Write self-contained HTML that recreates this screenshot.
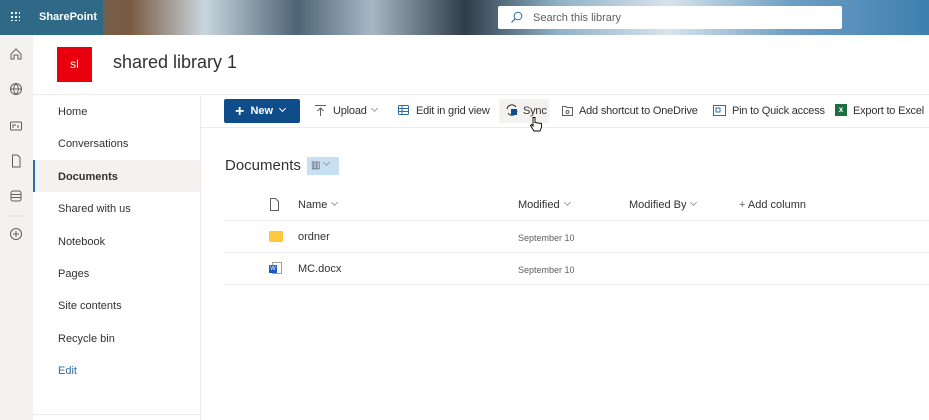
<!DOCTYPE html>
<html><head><meta charset="utf-8"><style>
*{margin:0;padding:0;box-sizing:border-box}
body{width:929px;height:420px;overflow:hidden;background:#fff;font-family:"Liberation Sans",sans-serif;color:#323130;position:relative;font-size:11px}
.a{position:absolute;white-space:nowrap}
.top{left:0;top:0;width:929px;height:35px;background:linear-gradient(90deg,#5c6f7a 0%,#7a5a40 14%,#c9d6de 22%,#4e6474 32%,#a7b8c4 40%,#2f3d48 50%,#8fb0c8 60%,#d8e4ec 72%,#6f9fc4 85%,#3d7fb0 100%)}
.brand{left:0;top:0;width:103px;height:35px;background:#2e6a88}
.rail{left:0;top:35px;width:33px;height:385px;background:#f3f2f1}
.nav div{position:absolute;left:58px;font-size:11px}
.cmd{font-size:11px;color:#323130;letter-spacing:-0.2px}
.ch{display:inline-block;width:5px;height:5px;border-right:1px solid #a19f9d;border-bottom:1px solid #a19f9d;transform:rotate(45deg);margin-left:5px;vertical-align:3px}
</style></head><body>
<div class="a top"></div>
<div class="a brand"></div>
<div class="a" style="left:10px;top:11px;width:10px;height:10px;background:radial-gradient(circle,#fff 1px,transparent 1.3px) 0 0/4px 4px"></div>
<div class="a" style="left:39px;top:11px;color:#fff;font-weight:bold;font-size:11px">SharePoint</div>
<div class="a" style="left:498px;top:6px;width:344px;height:23px;background:#fff;border-radius:2px"></div>
<svg class="a" style="left:510px;top:11px" width="13" height="13" viewBox="0 0 13 13"><circle cx="8" cy="5" r="3.8" fill="none" stroke="#2f6ea5" stroke-width="1"/><path d="M5.3 7.7L1.5 11.5" stroke="#2f6ea5" stroke-width="1.2"/></svg>
<div class="a" style="left:533px;top:12px;color:#605e5c;font-size:11px">Search this library</div>

<div class="a rail"></div>
<svg class="a" style="left:8px;top:45px" width="16" height="210" viewBox="0 0 16 210" fill="none" stroke="#605e5c" stroke-width="1">
<path d="M3 9L8 4L13 9V14H10V10H6V14H3Z"/>
<circle cx="8" cy="44" r="5.5"/><path d="M2.5 44H13.5M8 38.5C5 42 5 46 8 49.5C11 46 11 42 8 38.5"/>
<rect x="2.5" y="77" width="11" height="8" rx="1"/><path d="M5 83V80H8M10 80V83"/>
<path d="M4.5 110H9.5L12 112.5V122H4.5Z"/>
<rect x="3" y="146" width="10" height="10" rx="2"/><path d="M3 149.5H13M3 152.5H13"/>
<line x1="0" y1="171" x2="16" y2="171" stroke="#e1dfdd"/>
<circle cx="8" cy="189" r="5.5"/><path d="M8 186V192M5 189H11"/>
</svg>

<div class="a" style="left:57px;top:47px;width:35px;height:35px;background:#e8000f;color:#fff;font-size:12px;text-align:center;line-height:35px">sl</div>
<div class="a" style="left:113px;top:52px;font-size:18px;color:#323130">shared library 1</div>

<div class="a" style="left:33px;top:94px;width:896px;height:1px;background:#edebe9"></div>
<div class="a" style="left:200px;top:95px;width:1px;height:325px;background:#edebe9"></div>
<div class="a" style="left:33px;top:414px;width:167px;height:1px;background:#edebe9"></div>
<div class="a" style="left:33px;top:160px;width:167px;height:32px;background:#f3f2f1"></div>
<div class="a" style="left:33px;top:160px;width:2px;height:32px;background:#2f6ea5"></div>
<div class="nav">
<div style="top:106px">Home</div>
<div style="top:138px">Conversations</div>
<div style="top:171px;font-weight:bold">Documents</div>
<div style="top:203px">Shared with us</div>
<div style="top:236px">Notebook</div>
<div style="top:268px">Pages</div>
<div style="top:300px">Site contents</div>
<div style="top:333px">Recycle bin</div>
<div style="top:365px;color:#2f6ea5">Edit</div>
</div>

<div class="a" style="left:201px;top:127px;width:728px;height:1px;background:#edebe9"></div>
<div class="a" style="left:224px;top:99px;width:76px;height:24px;background:#0f4c8a;border-radius:2px;color:#fff;font-weight:bold;font-size:11px;line-height:24px;padding-left:11px"><span style="font-size:16px;vertical-align:-2px">+</span>&nbsp; New<span class="ch" style="border-color:#fff;margin-left:7px"></span></div>
<div class="a" style="left:499px;top:99px;width:50px;height:24px;background:#f3f2f1"></div>
<svg class="a" style="left:314px;top:104px" width="13" height="13" fill="none" stroke="#605e5c"><path d="M1 1.5H12M6.5 12V4M3.5 7L6.5 4L9.5 7"/></svg>
<div class="a cmd" style="left:333px;top:105px">Upload<span class="ch"></span></div>
<svg class="a" style="left:398px;top:104px" width="12" height="12" fill="none" stroke="#2f6ea5"><rect x="0.5" y="1.5" width="10" height="9" rx="1"/><path d="M0.5 4.5H10.5M0.5 7.5H10.5M4 1.5V10.5"/></svg>
<div class="a cmd" style="left:416px;top:105px">Edit in grid view</div>
<svg class="a" style="left:505px;top:103px" width="14" height="14" fill="none"><path d="M2 6A5 5 0 0 1 11 4" stroke="#323130"/><path d="M12 8A5 5 0 0 1 3 10" stroke="#323130"/><rect x="6" y="6" width="6" height="6" fill="#0f4c8a"/></svg>
<div class="a cmd" style="left:523px;top:105px">Sync</div>
<svg class="a" style="left:529px;top:116px" width="14" height="18"><path d="M4 1.5V10L2.5 8.5 1.5 9.5 5 15H11L12.5 11V7.5L6 6.5V1.5Z" fill="#fff" stroke="#000" stroke-width="0.9"/></svg>
<svg class="a" style="left:561px;top:104px" width="13" height="13" fill="none" stroke="#605e5c"><path d="M1.5 2.5H5L6 3.5H11.5V11.5H1.5Z"/><circle cx="6.5" cy="8" r="1.5"/></svg>
<div class="a cmd" style="left:579px;top:105px">Add shortcut to OneDrive</div>
<svg class="a" style="left:713px;top:104px" width="13" height="13" fill="none" stroke="#2f6ea5"><rect x="0.5" y="1.5" width="12" height="10"/><rect x="3" y="4" width="4" height="4"/></svg>
<div class="a cmd" style="left:732px;top:105px">Pin to Quick access</div>
<div class="a" style="left:835px;top:104px;width:12px;height:12px;background:#1d6f42;color:#fff;font-size:8px;font-weight:bold;text-align:center;line-height:12px">x</div>
<div class="a cmd" style="left:853px;top:105px">Export to Excel</div>

<div class="a" style="left:225px;top:157px;font-size:15px;color:#323130">Documents</div>
<div class="a" style="left:307px;top:157px;width:32px;height:18px;background:#c7e0f4;color:#605e5c;font-size:10px;line-height:18px;padding-left:4px">▥<span class="ch" style="margin-left:4px"></span></div>

<svg class="a" style="left:269px;top:198px" width="11" height="13" fill="none" stroke="#605e5c"><path d="M1.5 0.5H6.5L9.5 3.5V12.5H1.5Z"/></svg>
<div class="a" style="left:298px;top:199px">Name<span class="ch"></span></div>
<div class="a" style="left:518px;top:199px">Modified<span class="ch"></span></div>
<div class="a" style="left:629px;top:199px">Modified By<span class="ch"></span></div>
<div class="a" style="left:739px;top:199px"><span style="color:#605e5c">+</span> Add column</div>
<div class="a" style="left:224px;top:220px;width:705px;height:1px;background:#edebe9"></div>
<div class="a" style="left:224px;top:252px;width:705px;height:1px;background:#edebe9"></div>
<div class="a" style="left:224px;top:284px;width:705px;height:1px;background:#edebe9"></div>
<div class="a" style="left:269px;top:231px;width:14px;height:11px;background:#ffc83d;border-radius:1px"></div>
<div class="a" style="left:298px;top:231px">ordner</div>
<div class="a" style="left:518px;top:233px;font-size:9px;color:#605e5c">September 10</div>
<div class="a" style="left:272px;top:262px;width:10px;height:12px;border:1px solid #a19f9d;background:#fff"></div>
<div class="a" style="left:269px;top:265px;width:8px;height:8px;background:#185abd;color:#fff;font-size:6px;text-align:center;line-height:8px">W</div>
<div class="a" style="left:298px;top:263px">MC.docx</div>
<div class="a" style="left:518px;top:265px;font-size:9px;color:#605e5c">September 10</div>
</body></html>
